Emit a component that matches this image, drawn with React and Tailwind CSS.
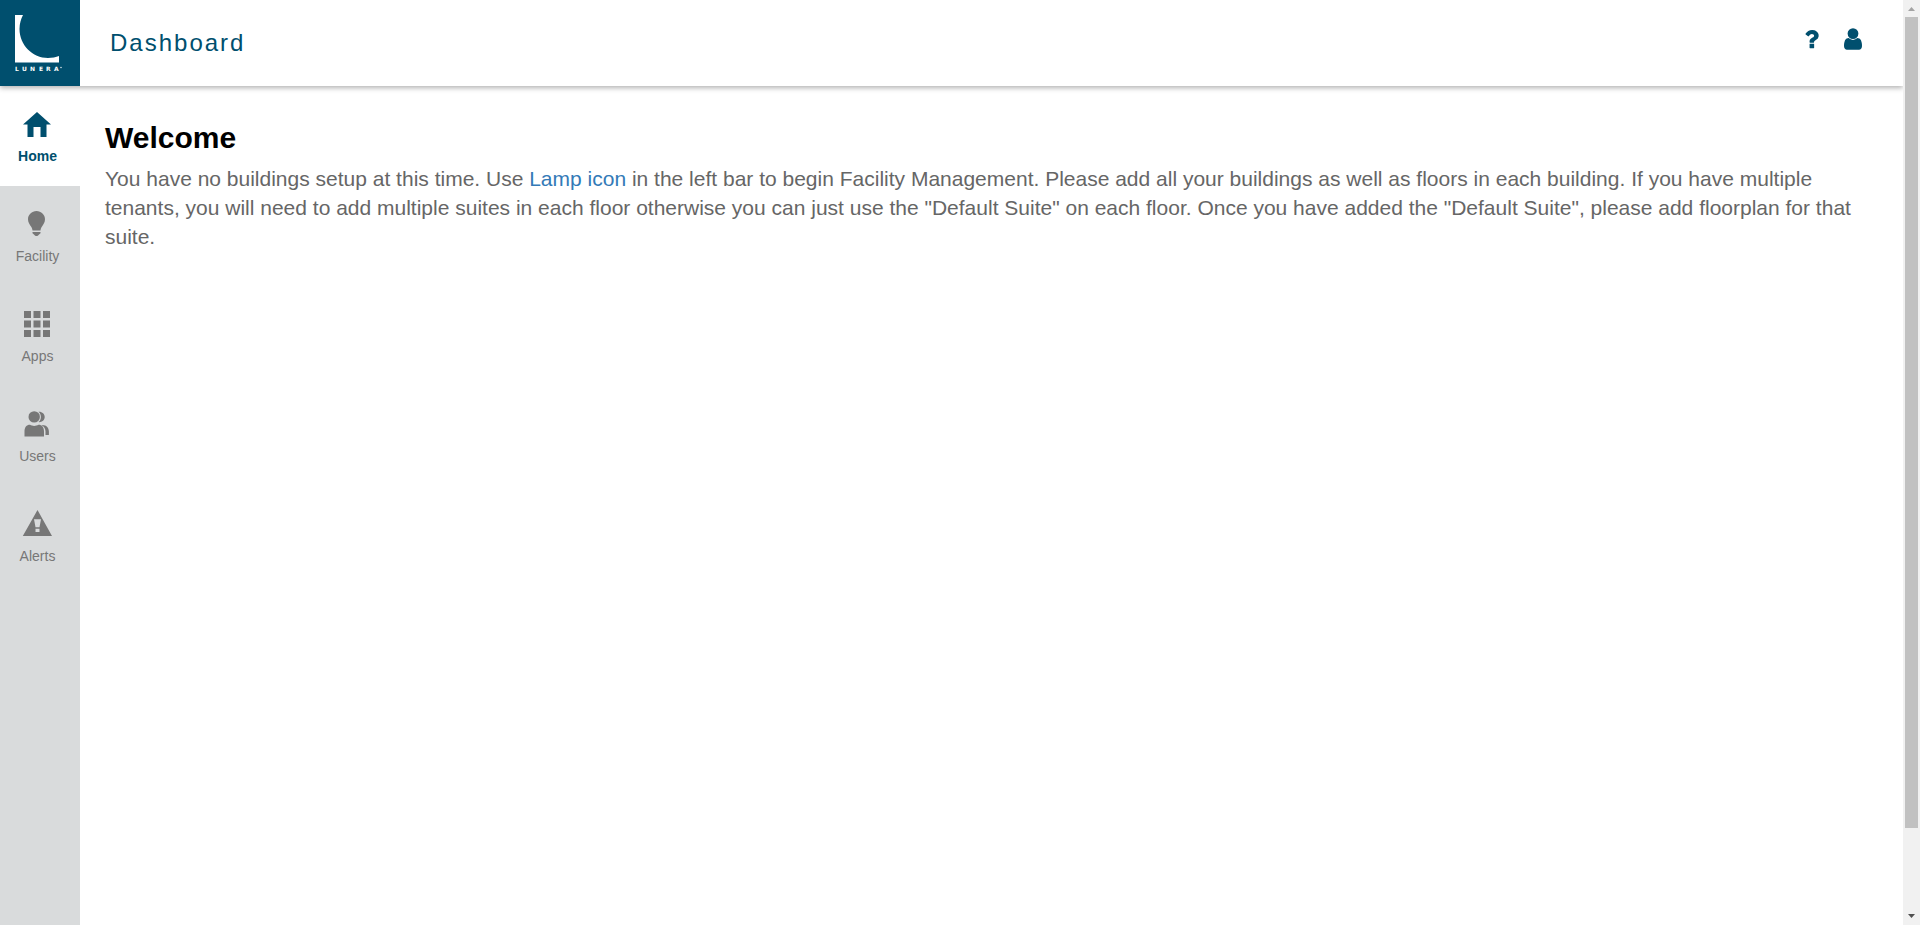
import React from "react";

function HomeIcon() {
  return (
    <svg width="28" height="25" viewBox="0 0 28 25" fill="currentColor" aria-hidden="true">
      <path d="M14 0 28 12.5H23.5V25H17.500V15H10.500V25H4.500V12.500H0Z" />
    </svg>
  );
}

function BulbIcon() {
  return (
    <svg width="18" height="26" viewBox="0 0 18 26" fill="currentColor" aria-hidden="true">
      <path d="M8.500 0C3.800 0 0 3.700 0 8.300 0 11.500 1.700 13.500 3 15.500 4 17 4.300 18.300 4.500 19.500H12.500C12.700 18.300 13 17 14 15.500 15.300 13.500 17 11.500 17 8.300 17 3.700 13.200 0 8.500 0Z" />
      <path d="M4.500 21H12.500V22.300L10.500 24C10 24.700 9.500 25 8.500 25S7 24.700 6.500 24L4.500 22.300Z" />
    </svg>
  );
}

function AppsIcon() {
  return (
    <svg width="26" height="26" viewBox="0 0 26 26" fill="currentColor" aria-hidden="true">
      <path d="M0 0H7V7H0ZM9.500 0H16.500V7H9.500ZM19 0H26V7H19ZM0 9.500H7V16.500H0ZM9.500 9.500H16.500V16.500H9.500ZM19 9.500H26V16.500H19ZM0 19H7V26H0ZM9.500 19H16.500V26H9.500ZM19 19H26V26H19Z" />
    </svg>
  );
}

function UsersIcon() {
  return (
    <svg width="26" height="26" viewBox="0 0 26 26" fill="currentColor" aria-hidden="true">
      <circle cx="10.200" cy="5.900" r="5.700" />
      <path d="M14.500 0.700C18 0.400 20.700 2.800 20.700 5.900S18 11.400 14.500 11.100C16 9.900 16.900 8 16.900 5.900S16 1.900 14.500 0.700Z" />
      <path d="M0.500 25.500V20.500C0.500 16.500 2.500 13.800 6 13.800 7.200 14.600 8.700 14.900 10.200 14.900S13.200 14.600 14.500 13.800C18 13.800 20 16.500 20 20.500V25.500Z" />
      <path d="M17.500 14C22 13.500 24.900 16.500 24.900 20.500V24H21.500V20.500C21.500 17.500 20 15.500 17.500 14Z" />
    </svg>
  );
}

function AlertIcon() {
  return (
    <svg width="30" height="27" viewBox="-0.500 0 30 27" fill="currentColor" aria-hidden="true">
      <path fillRule="evenodd" d="M15 0 29.500 26H0.300ZM11.500 9.300 13 17.200H17L18.500 9.300ZM13 18.700V22H17V18.700Z" />
    </svg>
  );
}

function Logo() {
  return (
    <svg width="50" height="58" viewBox="0 0 50 58" fill="#fff" role="img" aria-label="Lunera">
      <path d="M0 0H8C6 4 4.500 8.500 4.500 14C4.500 30 17.500 43 33 43C37 43 41 42.200 44 41V47.500H0Z" />
      <text
        y="56"
        fontFamily="DejaVu Sans, sans-serif"
        fontWeight="700"
        fontSize="6"
      >
        <tspan x="0">L</tspan>
        <tspan x="7">U</tspan>
        <tspan x="15">N</tspan>
        <tspan x="24">E</tspan>
        <tspan x="31">R</tspan>
        <tspan x="39">A</tspan>
      </text>
      <circle cx="46" cy="52.500" r="0.700" />
    </svg>
  );
}

function QuestionIcon() {
  return (
    <svg width="15" height="20" viewBox="64 128 1050 1400" fill="currentColor" aria-hidden="true">
      <path d="M704 1192v240q0 16-12 28t-28 12h-240q-16 0-28-12t-12-28v-240q0-16 12-28t28-12h240q16 0 28 12t12 28zm316-600q0 54-15.500 101t-35 76.500-55 59.500-57.500 43.500-61 35.500q-41 23-68.500 65t-27.500 67q0 17-12 32.500t-28 15.500h-240q-15 0-25.500-18.500t-10.500-37.500v-45q0-83 65-156.500t143-108.500q59-27 84-56t25-76q0-42-46.500-74t-107.500-32q-65 0-108 29-35 25-107 115-13 16-31 16-12 0-25-8l-164-125q-13-10-15.500-25t5.500-28q160-266 464-266 80 0 161 31t146 83 106 127.500 41 158.500z" />
    </svg>
  );
}

function UserIcon() {
  return (
    <svg width="18" height="22" viewBox="0 128 1280 1536" fill="currentColor" aria-hidden="true">
      <path d="M1280 1399q0 109-62.500 187t-150.500 78h-854q-88 0-150.500-78t-62.500-187q0-85 8.500-160.500t31.500-152 58.500-131 94-89 134.500-34.500q131 128 313 128t313-128q76 0 134.500 34.500t94 89 58.500 131 31.500 152 8.500 160.500zm-256-887q0 159-112.500 271.500t-271.500 112.500-271.500-112.500-112.500-271.500 112.500-271.500 271.500-112.500 271.500 112.500 112.500 271.500z" />
    </svg>
  );
}

const items = [
  { label: "Home", Icon: HomeIcon, active: true },
  { label: "Facility", Icon: BulbIcon },
  { label: "Apps", Icon: AppsIcon },
  { label: "Users", Icon: UsersIcon },
  { label: "Alerts", Icon: AlertIcon },
];

function Header() {
  return (
    <header className="relative z-10 flex h-[86px] shrink-0 items-stretch bg-white text-[#004f6e] shadow-[0_2px_5px_rgba(0,0,0,0.3)]">
      <a href="#home" className="flex w-20 bg-[#004f6e] pt-[15px] pl-[15px]">
        <Logo />
      </a>
      <div className="flex flex-1 items-center justify-between pr-[41px] pl-[30px]">
        <h1 className="text-2xl tracking-[2px]">Dashboard</h1>
        <div className="flex items-center gap-6 pb-2">
          <button type="button" aria-label="Help">
            <QuestionIcon />
          </button>
          <button type="button" aria-label="Account">
            <UserIcon />
          </button>
        </div>
      </div>
    </header>
  );
}

function Sidebar() {
  return (
    <nav className="w-20 shrink-0 bg-[#d9dbdc]">
      {items.map(({ label, Icon, active }) => (
        <a
          key={label}
          href={"#" + label.toLowerCase()}
          className={
            active
              ? "flex h-[100px] flex-col items-center bg-white pt-[23px] pr-[5px] text-sm font-bold text-[#004f6e]"
              : "flex h-[100px] flex-col items-center pt-[23px] pr-[5px] text-sm text-[#777]"
          }
        >
          <span className="flex h-7 items-end pr-px">
            <Icon />
          </span>
          <span className="mt-[9px]">{label}</span>
        </a>
      ))}
    </nav>
  );
}

function ScrollRail() {
  return (
    <div className="flex w-[17px] shrink-0 flex-col items-center bg-[#f1f1f1]" aria-hidden="true">
      <svg className="h-[17px] w-[17px] shrink-0" viewBox="0 0 17 17" fill="#a3a3a3">
        <path d="M8.500 7 12 11H5Z" />
      </svg>
      <div className="w-full flex-1 px-[2px]">
        <div className="h-[91%] bg-[#c1c1c1]" />
      </div>
      <svg className="h-[17px] w-[17px] shrink-0" viewBox="0 0 17 17" fill="#505050">
        <path d="M5 6H12L8.500 10Z" />
      </svg>
    </div>
  );
}

export default function App() {
  return (
    <div className="flex h-screen bg-white font-['Liberation_Sans',Arial,sans-serif]">
      <div className="flex min-w-0 flex-1 flex-col overflow-hidden">
        <Header />
        <div className="flex flex-1">
          <Sidebar />
          <main className="flex-1 pt-[34px] pr-[50px] pl-[25px]">
            <h2 className="text-[30px] leading-9 font-bold text-black">Welcome</h2>
            <p className="mt-2 text-[21px] leading-[29px] text-[#666]">
              You have no buildings setup at this time. Use{" "}
              <a href="#facility" className="text-[#337ab7]">
                Lamp icon
              </a>{" "}
              in the left bar to begin Facility Management. Please add all your buildings as well as
              floors in each building. If you have multiple tenants, you will need to add multiple
              suites in each floor otherwise you can just use the "Default Suite" on each floor. Once
              you have added the "Default Suite", please add floorplan for that suite.
            </p>
          </main>
        </div>
      </div>
      <ScrollRail />
    </div>
  );
}
